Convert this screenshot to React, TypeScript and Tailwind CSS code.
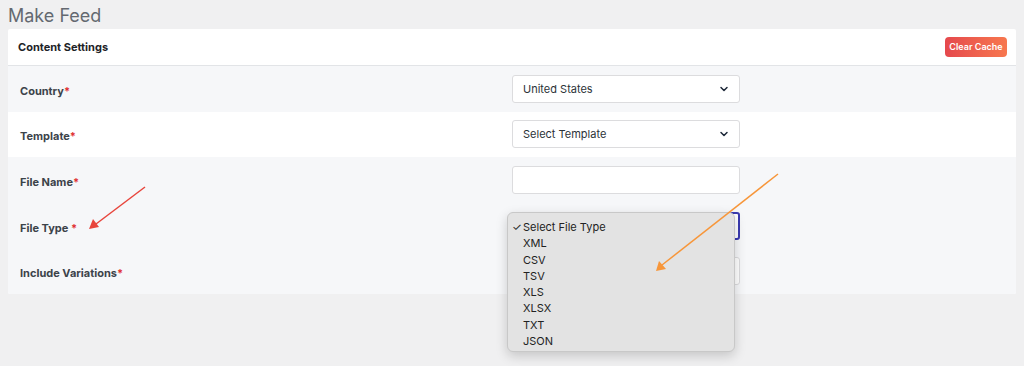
import React from 'react'

const font = { fontFamily: 'Inter, "Noto Sans", sans-serif' }

const Chevron = () => (
  <svg width="10" height="10" viewBox="0 0 10 10" className="text-gray-800">
    <path d="M2 3.5 L5 6.5 L8 3.5" fill="none" stroke="currentColor" strokeWidth="1.5" strokeLinecap="round" strokeLinejoin="round" />
  </svg>
)

const Label: React.FC<{ text: string; gap?: boolean }> = ({ text, gap }) => (
  <span className="text-[11px] font-bold text-[#3c434a]">
    {text}
    {gap ? ' ' : ''}
    <span className="text-[#e03131]">*</span>
  </span>
)

const SelectBox: React.FC<{ value?: string; focused?: boolean }> = ({ value, focused }) => (
  <div
    className={`flex h-[28px] w-[228px] items-center justify-between rounded-[3px] bg-white pl-[10px] pr-[10px] text-[11px] text-[#2c3338] ${
      focused ? 'border-2 border-[#3b3bb0]' : 'border border-[#dcdcde]'
    }`}
  >
    <span>{value}</span>
    {value ? <Chevron /> : null}
  </div>
)

const Row: React.FC<{ label: React.ReactNode; white?: boolean; children: React.ReactNode }> = ({ label, white, children }) => (
  <div className={`flex h-[45.6px] items-center ${white ? 'bg-white' : 'bg-[#f6f7f9]'}`}>
    <div className="w-[504px] pl-[12px]">{label}</div>
    <div>{children}</div>
  </div>
)

const options = ['XML', 'CSV', 'TSV', 'XLS', 'XLSX', 'TXT', 'JSON']

export default function App() {
  return (
    <div className="relative h-[366px] w-[1024px] overflow-hidden bg-[#f0f0f1]" style={font}>
      <div className="px-[8px] pt-[5px]">
        <h1 className="text-[18px] leading-[22px] text-[#646970]">Make Feed</h1>
        <div className="mt-[2px] w-[1008px] overflow-hidden rounded-[2px] bg-white">
          <div className="flex h-[37px] items-center justify-between border-b border-[#e2e4e7] pl-[10px] pr-[9px]">
            <span className="text-[11px] font-bold text-[#1d2327]">Content Settings</span>
            <button className="h-[20px] w-[62px] rounded-[4px] bg-gradient-to-r from-[#e5484d] to-[#f7774e] text-[9px] font-semibold text-white">
              Clear Cache
            </button>
          </div>
          <Row label={<Label text="Country" />}>
            <SelectBox value="United States" />
          </Row>
          <Row white label={<Label text="Template" />}>
            <SelectBox value="Select Template" />
          </Row>
          <Row label={<Label text="File Name" />}>
            <div className="h-[28px] w-[228px] rounded-[3px] border border-[#dcdcde] bg-white" />
          </Row>
          <Row label={<Label text="File Type" gap />}>
            <SelectBox value="Select File Type" focused />
          </Row>
          <Row label={<Label text="Include Variations" />}>
            <SelectBox />
          </Row>
        </div>
      </div>

      {/* native select menu */}
      <div className="absolute left-[507px] top-[212px] h-[140px] w-[228px] rounded-[6px] border border-[#c8c8c8] bg-[#e3e3e3] pt-[6px] text-[11px] text-[#222] shadow-[0_4px_12px_rgba(0,0,0,0.18)]">
        <div className="flex h-[16.3px] items-center pl-[4px]">
          <span className="w-[11px]">✓</span>
          <span>Select File Type</span>
        </div>
        {options.map(o => (
          <div key={o} className="flex h-[16.3px] items-center pl-[15px]">
            {o}
          </div>
        ))}
      </div>

      {/* annotation arrows */}
      <svg className="pointer-events-none absolute left-0 top-0" width="1024" height="366">
        <line x1="145" y1="187" x2="96" y2="224" stroke="#e8453c" strokeWidth="1.5" />
        <polygon points="89,229 93,219 99,227" fill="#e8453c" />
        <line x1="778" y1="174" x2="662" y2="265" stroke="#f7963a" strokeWidth="1.5" />
        <polygon points="656,271 659,261 666,269" fill="#f7963a" />
      </svg>
    </div>
  )
}
